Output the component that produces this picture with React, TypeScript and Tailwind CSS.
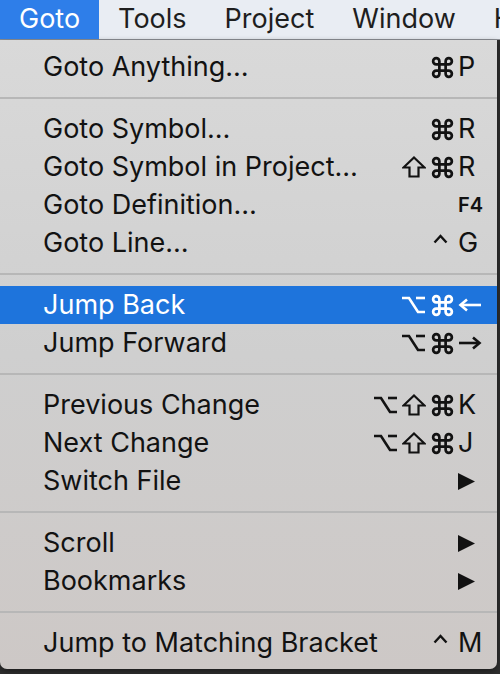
import React from 'react';
import { Command } from 'lucide-react';

type Mod = 'opt' | 'shift' | 'cmd' | 'ctrl';

type Item =
  | { kind: 'item'; label: string; mods?: Mod[]; keyChar?: string; keyIcon?: 'left' | 'right'; small?: boolean; submenu?: boolean; active?: boolean }
  | { kind: 'sep' };

const items: Item[] = [
  { kind: 'item', label: 'Goto Anything…', mods: ['cmd'], keyChar: 'P' },
  { kind: 'sep' },
  { kind: 'item', label: 'Goto Symbol…', mods: ['cmd'], keyChar: 'R' },
  { kind: 'item', label: 'Goto Symbol in Project…', mods: ['shift', 'cmd'], keyChar: 'R' },
  { kind: 'item', label: 'Goto Definition…', keyChar: 'F4', small: true },
  { kind: 'item', label: 'Goto Line…', mods: ['ctrl'], keyChar: 'G' },
  { kind: 'sep' },
  { kind: 'item', label: 'Jump Back', mods: ['opt', 'cmd'], keyIcon: 'left', active: true },
  { kind: 'item', label: 'Jump Forward', mods: ['opt', 'cmd'], keyIcon: 'right' },
  { kind: 'sep' },
  { kind: 'item', label: 'Previous Change', mods: ['opt', 'shift', 'cmd'], keyChar: 'K' },
  { kind: 'item', label: 'Next Change', mods: ['opt', 'shift', 'cmd'], keyChar: 'J' },
  { kind: 'item', label: 'Switch File', submenu: true },
  { kind: 'sep' },
  { kind: 'item', label: 'Scroll', submenu: true },
  { kind: 'item', label: 'Bookmarks', submenu: true },
  { kind: 'sep' },
  { kind: 'item', label: 'Jump to Matching Bracket', mods: ['ctrl'], keyChar: 'M' },
];

const menus = ['Goto', 'Tools', 'Project', 'Window', 'Help'];

function ModIcon({ mod }: { mod: Mod }) {
  if (mod === 'cmd') {
    return <Command size={25} strokeWidth={2.6} />;
  }
  if (mod === 'opt') {
    return (
      <svg width="25" height="18" viewBox="0 0 25 18" fill="none" stroke="currentColor" strokeWidth="2.6">
        <path d="M1 2H8L17 16H24" />
        <path d="M15 2H24" />
      </svg>
    );
  }
  if (mod === 'shift') {
    return (
      <svg width="24" height="22" viewBox="0 0 24 22" fill="none" stroke="currentColor" strokeWidth="2.2" strokeLinejoin="miter">
        <path d="M12 1.5L22.5 11.5H16.5V20.5H7.5V11.5H1.5Z" />
      </svg>
    );
  }
  // ctrl caret
  return (
    <svg width="15" height="20" viewBox="0 0 15 20" fill="none" stroke="currentColor" strokeWidth="2.4">
      <path d="M1.5 9.5L7.5 3L13.5 9.5" />
    </svg>
  );
}

function Arrow({ dir }: { dir: 'left' | 'right' }) {
  return (
    <svg width="24" height="14" viewBox="0 0 24 14" fill="none" stroke="currentColor" strokeWidth="2.6">
      {dir === 'left' ? (
        <>
          <path d="M3 7H23" />
          <path d="M9 1.5L2.5 7L9 12.5" />
        </>
      ) : (
        <>
          <path d="M1 7H21" />
          <path d="M15 1.5L21.5 7L15 12.5" />
        </>
      )}
    </svg>
  );
}

function App() {
  return (
    <div className="w-[500px] h-[674px] overflow-hidden bg-[#2e2e2e] font-['Inter','Liberation_Sans',sans-serif]">
      {/* Menu bar */}
      <div className="h-[40px] flex bg-[#e9edf3] border-b border-[#8d9096] text-[27px] text-[#1e1e1e] whitespace-nowrap">
        {menus.map((m, i) => (
          <div
            key={m}
            className={`px-[19px] flex items-center ${i === 0 ? 'bg-[#2e7ee9] text-white' : ''}`}
          >
            {m}
          </div>
        ))}
      </div>

      {/* Dropdown */}
      <div className="w-[497px] h-[629px] pt-[8px] rounded-b-[7px] bg-gradient-to-b from-[#d9d9d9] via-[#cfcfcf] to-[#cdc8c6] text-[27px] text-[#121212] shadow-[0_2px_6px_rgba(0,0,0,0.4)]">
        {items.map((it, i) =>
          it.kind === 'sep' ? (
            <div key={i} className="h-[24px] flex items-center">
              <div className="w-full h-[2px] bg-[#b7b7b7]" />
            </div>
          ) : (
            <div
              key={i}
              className={`h-[38px] flex items-center pl-[43px] ${it.active ? 'bg-[#1e74dc] text-white' : ''}`}
            >
              <span className="flex-1 whitespace-nowrap">{it.label}</span>
              {it.mods && (
                <span className="flex items-center gap-[4px] mr-[3px]">
                  {it.mods.map((m, j) => (
                    <span key={j} className={`flex items-center ${m === 'ctrl' ? 'mr-[7px]' : ''}`}>
                      <ModIcon mod={m} />
                    </span>
                  ))}
                </span>
              )}
              <span className="w-[39px] flex items-center">
                {it.keyChar && (
                  <span className={it.small ? 'text-[20px] font-semibold' : ''}>{it.keyChar}</span>
                )}
                {it.keyIcon && <Arrow dir={it.keyIcon} />}
                {it.submenu && (
                  <svg width="17" height="17" viewBox="0 0 17 17" fill="currentColor">
                    <path d="M0 0L17 8.5L0 17Z" />
                  </svg>
                )}
              </span>
            </div>
          )
        )}
      </div>
    </div>
  );
}

export default App;
